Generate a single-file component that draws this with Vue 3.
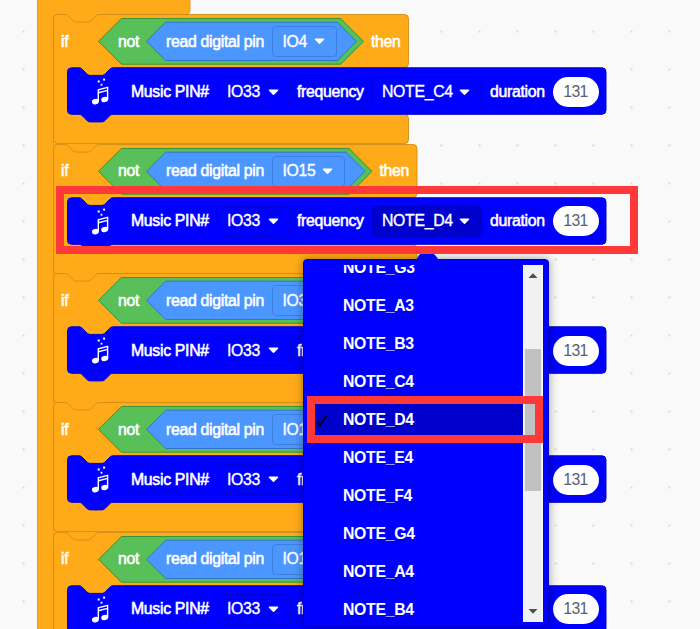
<script setup>
const NOTCH = 'c1.9 0 2.9 .9 3.8 1.9l3.8 3.8c.9 .9 1.9 1.9 3.8 1.9h11.4c1.9 0 2.9-.9 3.8-1.9l3.8-3.8c.9-.9 1.9-1.9 3.8-1.9'
const TAB = 'c-1.9 0-2.9 .9-3.8 1.9l-3.8 3.8c-.9 .9-1.9 1.9-3.8 1.9h-11.4c-1.9 0-2.9-.9-3.8-1.9l-3.8-3.8c-.9-.9-1.9-1.9-3.8-1.9'

const musicPath = `M0 4a4 4 0 0 1 4-4h7.4${NOTCH}H534.5a4 4 0 0 1 4 4V42.5a4 4 0 0 1-4 4H45.6${TAB}H4a4 4 0 0 1-4-4z`

const ifPath = (w) =>
  `M0 4a4 4 0 0 1 4-4h7.4${NOTCH}H${w - 4}a4 4 0 0 1 4 4V49a4 4 0 0 1-4 4H14V100H${w - 4}a4 4 0 0 1 4 4V125.2a4 4 0 0 1-4 4H4a4 4 0 0 1-4-4z`

const hexPath = (x, y, w, h) => {
  const r = h / 2
  return `M${x + r} ${y}H${x + w - r}L${x + w} ${y + r}L${x + w - r} ${y + h}H${x + r}L${x} ${y + r}z`
}

const blocks = [
  { pin: 'IO4', note: 'NOTE_C4', field: 64.5 },
  { pin: 'IO15', note: 'NOTE_D4', field: 73, open: true },
  { pin: 'IO32', note: 'NOTE_E4', field: 73 },
  { pin: 'IO13', note: 'NOTE_F4', field: 73 },
  { pin: 'IO14', note: 'NOTE_G4', field: 73 },
].map((b) => ({ ...b, width: b.field + 290.5 }))

const notes = ['NOTE_G3', 'NOTE_A3', 'NOTE_B3', 'NOTE_C4', 'NOTE_D4', 'NOTE_E4', 'NOTE_F4', 'NOTE_G4', 'NOTE_A4', 'NOTE_B4']
</script>

<template>
  <main class="workspace">
    <svg class="loop" width="154" height="640" viewBox="0 0 154 640">
      <path d="M.5 -5H153V10.500a4 4 0 0 1-4 4H16.500V645H.5z" />
    </svg>

    <section class="stack">
      <article v-for="b in blocks" :key="b.pin" class="block">
        <svg class="shape" width="560" height="132" viewBox="-.5 -.5 560 132">
          <path class="backing" :d="`M0 -.5H48V12H0zM1 124H${b.width - 4}V130H1z`" />
          <path class="control" :d="ifPath(b.width)" />
          <path class="backing" d="M13 52.500H64V62H13zM13 98H64V110H13z" />
          <path class="operator" :d="hexPath(45, 4, b.width - 90, 45.7)" />
          <path class="sensor" :d="hexPath(93, 7.7, b.width - 145, 38.3)" />
          <path class="music" :d="musicPath" transform="translate(14 53.3)" />
          <g class="glyph" transform="translate(-53.1 -14.2)">
            <rect x="97.300" y="80.200" width="2" height="2" />
            <rect x="102.700" y="78.300" width="2" height="2" />
            <rect x="100.200" y="83.500" width="1.800" height="1.800" />
            <ellipse cx="95" cy="101.300" rx="3.500" ry="2.700" transform="rotate(-15 95 101.300)" />
            <ellipse cx="104.300" cy="99.200" rx="3.500" ry="2.700" transform="rotate(-15 104.300 99.200)" />
            <path d="M97.900 101V89.400L107.200 87V99M97.900 92.500L107.200 90.100" />
          </g>
        </svg>
        <div class="row condition">
          <span>if</span>
          <span>not</span>
          <span>read digital pin</span>
          <span class="field light" :style="{ width: b.field + 'px' }">
            {{ b.pin }}
            <svg class="caret" width="11" height="7" viewBox="0 0 11 7"><path d="M1.500 1.200h8L5.500 5.300z" /></svg>
          </span>
          <span class="then">then</span>
        </div>
        <div class="row call">
          <span>Music PIN#</span>
          <span class="field pin">
            IO33
            <svg class="caret" width="11" height="7" viewBox="0 0 11 7"><path d="M1.500 1.200h8L5.500 5.300z" /></svg>
          </span>
          <span>frequency</span>
          <span class="field note" :class="{ open: b.open }">
            {{ b.note }}
            <svg class="caret" width="11" height="7" viewBox="0 0 11 7"><path d="M1.500 1.200h8L5.500 5.300z" /></svg>
          </span>
          <span>duration</span>
          <span class="number">131</span>
        </div>
      </article>
    </section>

    <div class="menu">
      <svg class="pointer" width="28" height="9" viewBox="0 0 28 9"><path d="M0 8.500C3 7.500 4 2 7 .5H19C22 2 24 7.500 28 8.500z" /></svg>
      <ul class="list">
        <li v-for="n in notes" :key="n" :class="{ selected: n === 'NOTE_D4' }">
          <svg class="check" width="14" height="16" viewBox="0 0 14 16"><path d="M1.500 10L4 13.500L10.500 3.500" /></svg>
          {{ n }}
        </li>
      </ul>
      <div class="scrollbar">
        <svg width="20" height="20" viewBox="0 0 20 20"><path d="M5.500 13L10 8.300L14.500 13z" /></svg>
        <div class="thumb"></div>
        <svg width="20" height="20" viewBox="0 0 20 20"><path d="M5.500 7L10 11.700L14.500 7z" /></svg>
      </div>
    </div>

    <div class="highlight call-mark"></div>
    <div class="highlight option-mark"></div>
  </main>
</template>

<style>
body {
  margin: 0;
  overflow: hidden;
}
</style>

<style scoped>
.workspace {
  position: relative;
  box-sizing: border-box;
  width: 700px;
  height: 629px;
  padding: 14.400px 0 0 53px;
  overflow: hidden;
  background-color: #f9f9f9;
  background-image: radial-gradient(circle at 19px 19px, #d4d4d4 0.6px, transparent 1.3px);
  background-size: 38px 38px;
  background-position: 4.5px 12.500px;
  color: #fff;
  font: 15.800px "Liberation Sans", Arial, sans-serif;
  letter-spacing: -0.300px;
}
.loop {
  position: absolute;
  left: 37px;
  top: 0;
  fill: #ffab19;
  stroke: #d9991f;
  stroke-width: 0.9;
}
.stack {
  position: relative;
  display: flex;
  flex-direction: column;
}
.block {
  position: relative;
  flex: none;
  height: 129.300px;
}
.shape {
  position: absolute;
  left: 0;
  top: 0;
}
.backing {
  fill: #ffab19;
}
.control {
  fill: #ffab19;
  stroke: #cf8b17;
  stroke-width: 0.9;
}
.operator {
  fill: #59c059;
  stroke: #389438;
}
.sensor {
  fill: #4c97ff;
  stroke: #3373cc;
}
.music {
  fill: #0000ff;
  stroke: #0000cc;
}
.glyph {
  fill: #fff;
}
.glyph path {
  fill: none;
  stroke: #fff;
  stroke-width: 1.400;
}
.row {
  position: relative;
  display: grid;
  align-items: center;
  white-space: nowrap;
  -webkit-text-stroke: 0.550px currentColor;
}
.condition {
  height: 53.700px;
  padding: 1.500px 0 0 8px;
  grid-template-columns: 57px 48px 106px max-content max-content;
  box-sizing: border-box;
}
.then {
  padding-left: 34.500px;
}
.call {
  height: 48px;
  padding-left: 78px;
  grid-template-columns: 85.500px 80.500px 74.500px 118.500px 62.500px 46px;
}
.field {
  box-sizing: border-box;
  display: flex;
  align-items: center;
  justify-content: space-between;
  height: 31px;
  padding: 0 11px 0 9.500px;
  border: 1px solid #0000db;
  border-radius: 4px;
  -webkit-text-stroke-width: 0.350px;
}
.light {
  border-color: #3c80df;
}
.pin {
  width: 74px;
}
.note {
  width: 110px;
}
.open {
  background: #0000cc;
  border-color: #0000cc;
}
.caret {
  fill: #fff;
  stroke: #fff;
  stroke-width: 1.500;
  stroke-linejoin: round;
}
.number {
  height: 30px;
  line-height: 30px;
  width: 46px;
  border-radius: 15px;
  background: #fff;
  color: #575e75;
  text-align: center;
  letter-spacing: -0.600px;
  -webkit-text-stroke-width: 0;
}
.menu {
  position: absolute;
  left: 303px;
  top: 259px;
  box-sizing: border-box;
  display: flex;
  width: 246px;
  height: 368px;
  padding: 5px 5px 4px 3px;
  border: 1px solid #0000cc;
  border-radius: 4px;
  background: #0000ff;
  box-shadow: 0 0 8px 1px rgba(0, 0, 0, 0.3);
}
.pointer {
  position: absolute;
  left: 110px;
  top: -7px;
  fill: #0000ff;
}
.list {
  flex: 1;
  height: 357px;
  margin: 0;
  padding: 0;
  overflow: hidden;
  list-style: none;
  font-weight: bold;
}
.list li {
  display: flex;
  align-items: center;
  gap: 13px;
  height: 38px;
  padding-left: 9px;
}
.list li:first-child {
  margin-top: -16.500px;
}
.selected {
  background: #0000cc;
}
.check {
  visibility: hidden;
  fill: none;
  stroke: #000;
  stroke-width: 1.700;
}
.selected .check {
  visibility: visible;
}
.scrollbar {
  display: flex;
  flex-direction: column;
  align-items: center;
  box-sizing: border-box;
  width: 20px;
  height: 357px;
  background: #f1f1f1;
  border: solid #fafafa;
  border-width: 0 1px;
  fill: #505050;
}
.thumb {
  width: 16px;
  height: 142px;
  margin: 64px 0 auto;
  background: #c1c1c1;
}
.highlight {
  position: absolute;
  box-sizing: border-box;
  border: 8px solid #ff3838;
}
.call-mark {
  left: 56px;
  top: 186px;
  width: 582px;
  height: 68px;
}
.option-mark {
  left: 307px;
  top: 396px;
  width: 236px;
  height: 47px;
}
</style>
